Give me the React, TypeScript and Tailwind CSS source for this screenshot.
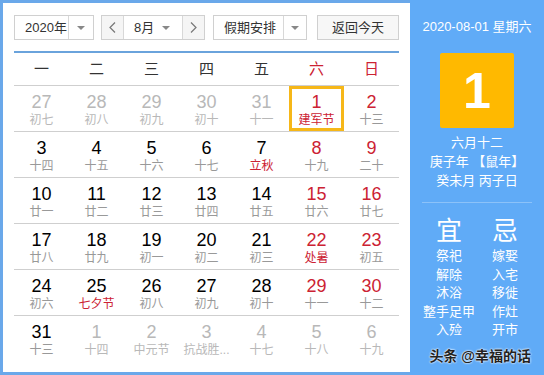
const CJK = "font-['Liberation_Sans','Noto_Sans_CJK_SC',sans-serif]";

type Day = { n: number; lunar: string; other?: boolean; red?: boolean; fest?: boolean; today?: boolean };

const rows: Day[][] = [
  [
    { n: 27, lunar: "初七", other: true },
    { n: 28, lunar: "初八", other: true },
    { n: 29, lunar: "初九", other: true },
    { n: 30, lunar: "初十", other: true },
    { n: 31, lunar: "十一", other: true },
    { n: 1, lunar: "建军节", red: true, fest: true, today: true },
    { n: 2, lunar: "十三", red: true },
  ],
  [
    { n: 3, lunar: "十四" },
    { n: 4, lunar: "十五" },
    { n: 5, lunar: "十六" },
    { n: 6, lunar: "十七" },
    { n: 7, lunar: "立秋", fest: true },
    { n: 8, lunar: "十九", red: true },
    { n: 9, lunar: "二十", red: true },
  ],
  [
    { n: 10, lunar: "廿一" },
    { n: 11, lunar: "廿二" },
    { n: 12, lunar: "廿三" },
    { n: 13, lunar: "廿四" },
    { n: 14, lunar: "廿五" },
    { n: 15, lunar: "廿六", red: true },
    { n: 16, lunar: "廿七", red: true },
  ],
  [
    { n: 17, lunar: "廿八" },
    { n: 18, lunar: "廿九" },
    { n: 19, lunar: "初一" },
    { n: 20, lunar: "初二" },
    { n: 21, lunar: "初三" },
    { n: 22, lunar: "处暑", red: true, fest: true },
    { n: 23, lunar: "初五", red: true },
  ],
  [
    { n: 24, lunar: "初六" },
    { n: 25, lunar: "七夕节", fest: true },
    { n: 26, lunar: "初八" },
    { n: 27, lunar: "初九" },
    { n: 28, lunar: "初十" },
    { n: 29, lunar: "十一", red: true },
    { n: 30, lunar: "十二", red: true },
  ],
  [
    { n: 31, lunar: "十三" },
    { n: 1, lunar: "十四", other: true },
    { n: 2, lunar: "中元节", other: true },
    { n: 3, lunar: "抗战胜...", other: true },
    { n: 4, lunar: "十七", other: true },
    { n: 5, lunar: "十八", other: true },
    { n: 6, lunar: "十九", other: true },
  ],
];

const weekdays = ["一", "二", "三", "四", "五", "六", "日"];

function Caret() {
  return <span className="h-0 w-0 border-x-[4px] border-t-[4px] border-x-transparent border-t-[#888]" />;
}

function Cell({ d }: { d: Day }) {
  const num = d.other ? "text-[#b8b8b8]" : d.red ? "text-[#cc2233]" : "text-black";
  const lunar = d.other ? "text-[#b8b8b8]" : d.fest ? "text-[#cc2233]" : "text-[#999]";
  return (
    <div
      className={`flex flex-col items-center pt-[6px] ${
        d.today ? "shadow-[inset_0_0_0_3px_#f6b718]" : ""
      }`}
    >
      <span className={`text-[18px] leading-[20px] ${num}`}>{d.n}</span>
      <span className={`whitespace-nowrap text-[12px] leading-[16px] ${lunar}`}>{d.lunar}</span>
    </div>
  );
}

export default function App() {
  return (
    <div className={`flex h-[375px] w-[544px] bg-white ${CJK}`}>
      <div className="flex h-full w-[410px] flex-col border-y-[3px] border-l-[3px] border-[#6aa8ea] px-[11px] pt-[12px]">
        {/* toolbar */}
        <div className="flex h-[25px] text-[13px] text-[#333]">
          <div className="flex w-[80px] border border-[#d0d0d0]">
            <span className="flex flex-1 items-center pl-[10px]">2020年</span>
            <span className="flex w-[25px] items-center justify-center border-l border-[#d8d8d8]">
              <Caret />
            </span>
          </div>
          <div className="ml-[7px] flex w-[104px] border border-[#d0d0d0]">
            <span className="flex w-[22px] items-center justify-center border-r border-[#d8d8d8] bg-[#f5f5f5] text-[#666]">
              <svg width="7" height="11" viewBox="0 0 7 11" fill="none" stroke="#777" strokeWidth="1.2">
                <path d="M6 0.5 L1 5.5 L6 10.5" />
              </svg>
            </span>
            <span className="flex flex-1 items-center justify-between pl-[10px] pr-[12px]">
              8月
              <Caret />
            </span>
            <span className="flex w-[22px] items-center justify-center border-l border-[#d8d8d8] bg-[#f5f5f5]">
              <svg width="7" height="11" viewBox="0 0 7 11" fill="none" stroke="#777" strokeWidth="1.2">
                <path d="M1 0.5 L6 5.5 L1 10.5" />
              </svg>
            </span>
          </div>
          <div className="ml-[8px] flex w-[94px] border border-[#d0d0d0]">
            <span className="flex flex-1 items-center pl-[10px]">假期安排</span>
            <span className="flex w-[23px] items-center justify-center border-l border-[#d8d8d8]">
              <Caret />
            </span>
          </div>
          <div className="ml-[10px] flex w-[82px] items-center justify-center border border-[#d0d0d0] bg-[#f7f7f7]">
            返回今天
          </div>
        </div>

        <div className="mt-[11px] h-[2px] bg-[#6aa3dc]" />

        {/* weekday header */}
        <div className="grid h-[33px] grid-cols-7 border-b border-[#cfcfcf] text-[15px]">
          {weekdays.map((w, i) => (
            <div
              key={w}
              className={`flex items-center justify-center ${i >= 5 ? "text-[#cc2233]" : "text-[#333]"}`}
            >
              {w}
            </div>
          ))}
        </div>

        {/* days */}
        {rows.map((r, ri) => (
          <div
            key={ri}
            className={`grid h-[46px] grid-cols-7 ${ri < rows.length - 1 ? "border-b border-[#cfcfcf]" : ""}`}
          >
            {r.map((d, di) => (
              <Cell key={di} d={d} />
            ))}
          </div>
        ))}
      </div>

      {/* side panel */}
      <div className="relative flex h-full flex-1 flex-col items-center bg-[#60abf7] text-white">
        <div className="pt-[19px] text-[13px] leading-[16px]">2020-08-01 星期六</div>
        <div className="mt-[18px] flex h-[75px] w-[74px] items-center justify-center rounded-[2px] bg-[#ffb900] text-[50px] font-bold leading-none">
          1
        </div>
        <div className="mt-[5px] flex flex-col items-center text-[13px] leading-[19px]">
          <span>六月十二</span>
          <span>庚子年 【鼠年】</span>
          <span>癸未月 丙子日</span>
        </div>
        <div className="mt-[12px] h-px w-[110px] bg-[#8cc2f9]" />
        <div className="mt-[13px] grid w-[112px] grid-cols-2 text-center">
          <span className="text-[26px] leading-[30px]">宜</span>
          <span className="text-[26px] leading-[30px]">忌</span>
          <div className="mt-px flex flex-col text-[13px] leading-[18.5px]">
            <span>祭祀</span>
            <span>解除</span>
            <span>沐浴</span>
            <span className="whitespace-nowrap">整手足甲</span>
            <span>入殓</span>
          </div>
          <div className="mt-px flex flex-col text-[13px] leading-[18.5px]">
            <span>嫁娶</span>
            <span>入宅</span>
            <span>移徙</span>
            <span>作灶</span>
            <span>开市</span>
          </div>
        </div>
        <div className="absolute bottom-[8px] right-[13px] whitespace-nowrap text-[14px] font-bold text-[#222] [text-shadow:0_0_2px_#fff,0_0_2px_#fff]">
          头条 @幸福的话
        </div>
      </div>
    </div>
  );
}
